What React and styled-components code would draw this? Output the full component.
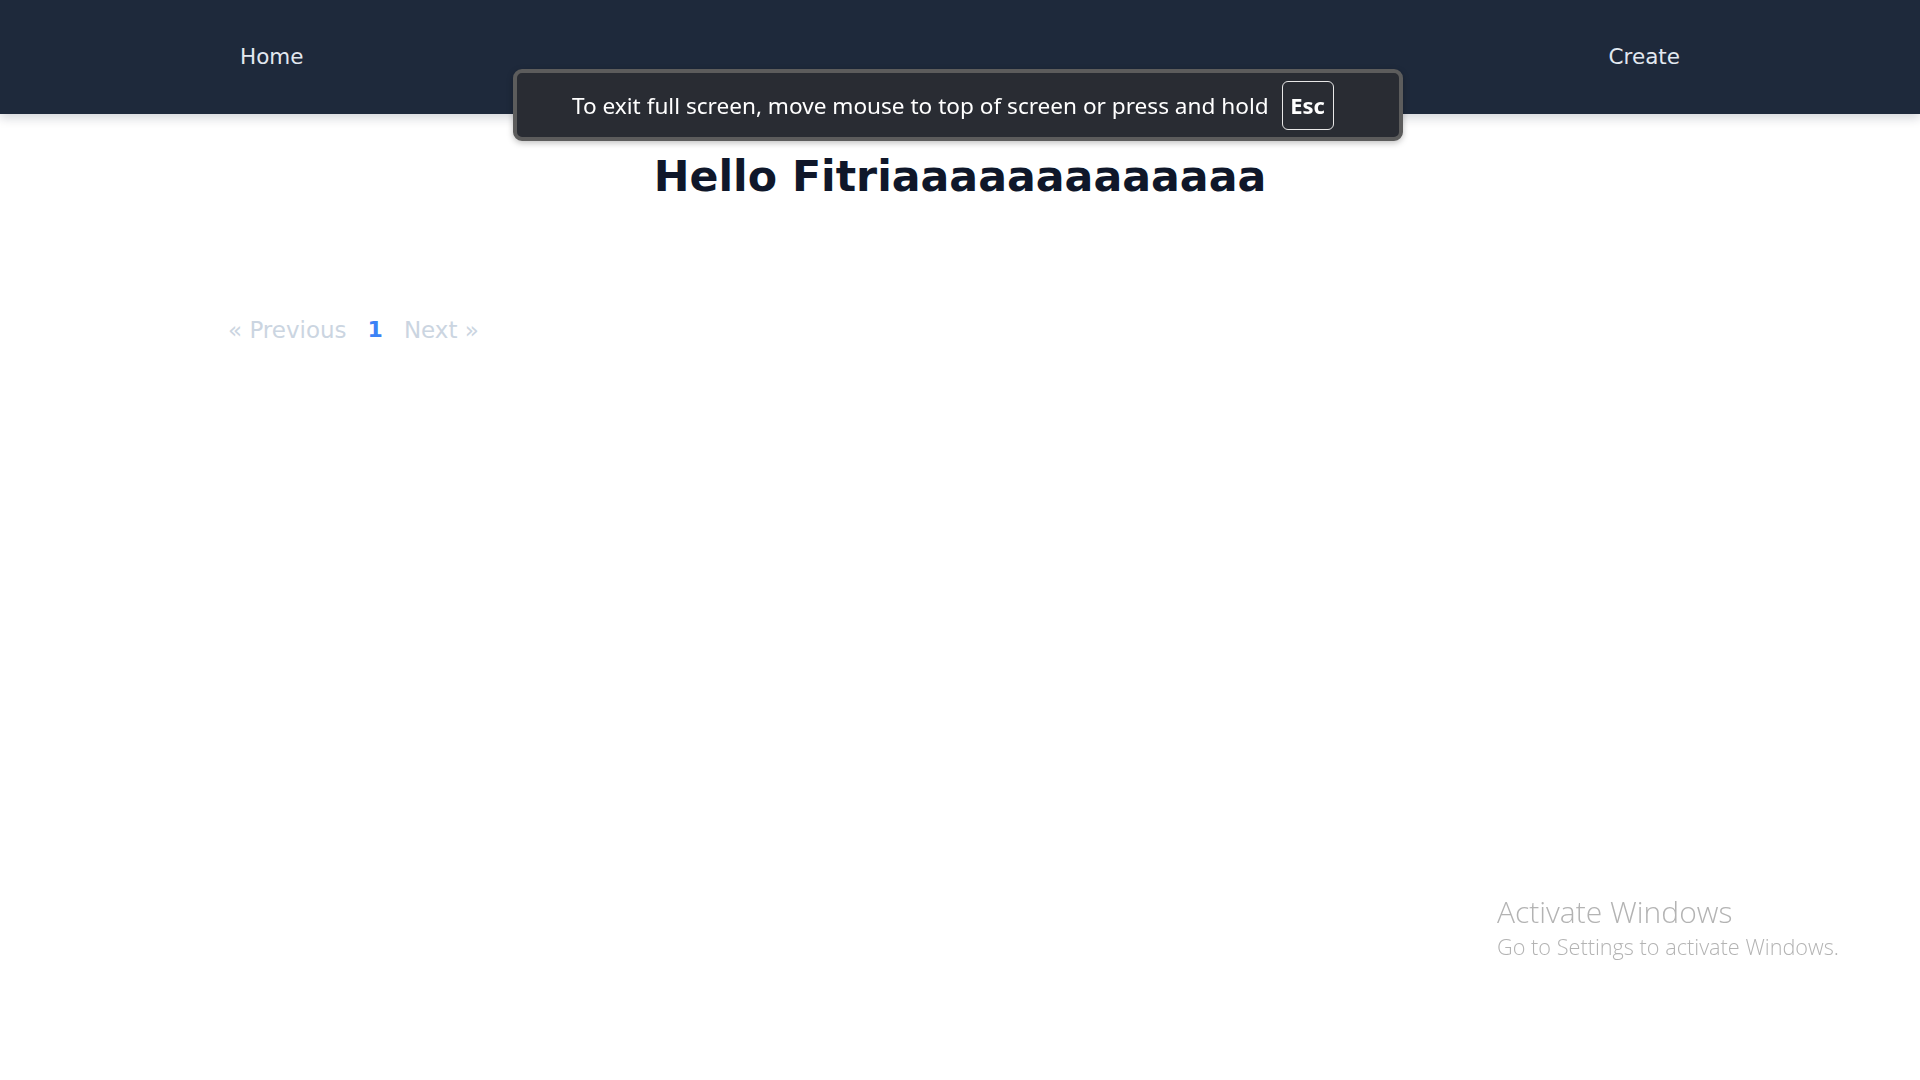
import React from "react";
import styled, { createGlobalStyle } from "styled-components";

const GlobalStyle = createGlobalStyle`
  html, body {
    margin: 0;
    padding: 0;
    background: #ffffff;
  }
  body {
    min-height: 1080px;
    font-family: "DejaVu Sans", "Noto Sans", sans-serif;
  }
`;

const Page = styled.div`
  min-height: 1080px;
  background: #ffffff;
`;

const NavBar = styled.nav`
  height: 114px;
  padding: 0 240px;
  display: flex;
  align-items: center;
  justify-content: space-between;
  background: #1e293b;
  box-shadow: 0 4px 10px rgba(15, 23, 42, 0.18);
`;

const NavLink = styled.a`
  font-family: "DejaVu Sans", sans-serif;
  font-size: 21.5px;
  line-height: 28px;
  color: #e2e8f0;
  text-decoration: none;
  cursor: pointer;
`;

const Main = styled.main`
  display: flex;
  flex-direction: column;
`;

const Title = styled.h1`
  margin: 37px 0 0;
  text-align: center;
  font-family: "DejaVu Sans", sans-serif;
  font-weight: 700;
  font-size: 42.7px;
  line-height: 50px;
  color: #0f172a;
`;

const Pager = styled.div`
  margin-top: 113px;
  padding-left: 228px;
  display: flex;
  align-items: center;
  gap: 21px;
  font-family: "DejaVu Sans", sans-serif;
  font-size: 23px;
  line-height: 32px;
`;

const PageLink = styled.span`
  color: ${(p) => (p.$active ? "#3b82f6" : "#cbd5e1")};
  font-weight: ${(p) => (p.$active ? 700 : 400)};
  font-size: ${(p) => (p.$active ? "22px" : "inherit")};
`;

const Toast = styled.div`
  position: fixed;
  top: 69px;
  left: 513px;
  width: 890px;
  height: 72px;
  box-sizing: border-box;
  padding-left: 55px;
  display: flex;
  align-items: center;
  gap: 13px;
  background: #292c33;
  border: 4px solid #5c5c5c;
  border-radius: 9px;
  box-shadow: 0 2px 6px rgba(0, 0, 0, 0.25);
`;

const ToastText = styled.span`
  font-family: "Noto Sans", "Open Sans", sans-serif;
  font-size: 22.6px;
  color: #ffffff;
  white-space: nowrap;
`;

const Key = styled.span`
  width: 52px;
  height: 49px;
  box-sizing: border-box;
  display: flex;
  align-items: center;
  justify-content: center;
  border: 1.5px solid #e8e8e8;
  border-radius: 6px;
  font-family: "Noto Sans", "Open Sans", sans-serif;
  font-weight: 700;
  font-size: 22px;
  color: #ffffff;
`;

const Watermark = styled.div`
  position: fixed;
  left: 1497px;
  top: 893px;
  font-family: "Open Sans", "Noto Sans", sans-serif;
  font-weight: 300;
  color: rgba(150, 150, 150, 0.72);
  pointer-events: none;
`;

const WatermarkTitle = styled.div`
  font-size: 30px;
  line-height: 37px;
`;

const WatermarkNote = styled.div`
  margin-top: 3px;
  font-size: 21.7px;
  line-height: 28px;
`;

export default function App() {
  return (
    <Page>
      <GlobalStyle />
      <NavBar>
        <NavLink>Home</NavLink>
        <NavLink>Create</NavLink>
      </NavBar>
      <Main>
        <Title>Hello Fitriaaaaaaaaaaaaa</Title>
        <Pager>
          <PageLink>« Previous</PageLink>
          <PageLink $active>1</PageLink>
          <PageLink>Next »</PageLink>
        </Pager>
      </Main>
      <Toast>
        <ToastText>To exit full screen, move mouse to top of screen or press and hold</ToastText>
        <Key>Esc</Key>
      </Toast>
      <Watermark>
        <WatermarkTitle>Activate Windows</WatermarkTitle>
        <WatermarkNote>Go to Settings to activate Windows.</WatermarkNote>
      </Watermark>
    </Page>
  );
}
